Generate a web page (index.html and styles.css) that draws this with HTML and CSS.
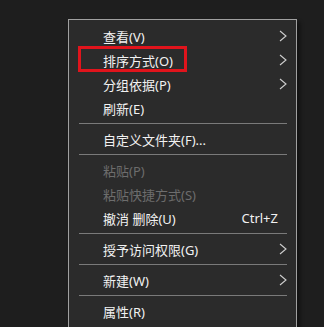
FILE: index.html
```html
<!DOCTYPE html>
<html lang="zh-CN">
<head>
  <meta charset="UTF-8" />
  <title>右键菜单</title>
  <link rel="stylesheet" href="styles.css">
</head>
<body>
  <div class="context-menu">
    <div class="item">
      <span class="label">查看(V)</span>
      <svg class="arrow" width="8" height="12" viewBox="0 0 8 12"><polyline points="1,1 7,6 1,11" /></svg>
    </div>
    <div class="item marked">
      <span class="label">排序方式(O)</span>
      <svg class="arrow" width="8" height="12" viewBox="0 0 8 12"><polyline points="1,1 7,6 1,11" /></svg>
      <span class="highlight-box"></span>
    </div>
    <div class="item">
      <span class="label">分组依据(P)</span>
      <svg class="arrow" width="8" height="12" viewBox="0 0 8 12"><polyline points="1,1 7,6 1,11" /></svg>
    </div>
    <div class="item">
      <span class="label">刷新(E)</span>
    </div>
    <div class="separator"></div>
    <div class="item">
      <span class="label">自定义文件夹(F)...</span>
    </div>
    <div class="separator"></div>
    <div class="item disabled">
      <span class="label">粘贴(P)</span>
    </div>
    <div class="item disabled">
      <span class="label">粘贴快捷方式(S)</span>
    </div>
    <div class="item">
      <span class="label">撤消 删除(U)</span>
      <span class="shortcut">Ctrl+Z</span>
    </div>
    <div class="separator"></div>
    <div class="item">
      <span class="label">授予访问权限(G)</span>
      <svg class="arrow" width="8" height="12" viewBox="0 0 8 12"><polyline points="1,1 7,6 1,11" /></svg>
    </div>
    <div class="separator"></div>
    <div class="item">
      <span class="label">新建(W)</span>
      <svg class="arrow" width="8" height="12" viewBox="0 0 8 12"><polyline points="1,1 7,6 1,11" /></svg>
    </div>
    <div class="separator"></div>
    <div class="item">
      <span class="label">属性(R)</span>
    </div>
  </div>
</body>
</html>
```

FILE: styles.css
```css
/* PAGE */
:root {
  --page-bg: #1e1e1e;
  --menu-bg: #2b2b2b;
  --menu-border: #a0a0a0;
  --text-color: #f2f2f2;
  --disabled-color: #6d6d6d;
  --mark-red: #e0141c;
}

html, body {
  margin: 0;
  padding: 0;
  height: 327px;
  overflow: hidden;
  background: var(--page-bg);
  font-family: "Noto Sans", "Noto Sans CJK SC", sans-serif;
  font-size: 13px;
  color: var(--text-color);
}

body {
  padding: 19px 0 0 68px;
  box-sizing: border-box;
}

/* MENU */
.context-menu {
  width: 229px;
  box-sizing: border-box;
  padding: 4px 0;
  background: var(--menu-bg);
  border: 1px solid var(--menu-border);
  box-shadow: 3px 3px 4px rgba(0, 0, 0, 0.45);
}

.item {
  position: relative;
  height: 24px;
  display: flex;
  align-items: center;
  justify-content: space-between;
  padding: 0 9px 0 34px;
  white-space: nowrap;
}

.item.disabled {
  color: var(--disabled-color);
}

.arrow {
  display: block;
}
.arrow polyline {
  fill: none;
  stroke: #cfcfcf;
  stroke-width: 1.1;
}

.shortcut {
  margin-right: 9px;
}

.separator {
  height: 1px;
  margin: 3px 9px 3px 10px;
  background: #7a7a7a;
}

/* red annotation around one entry */
.highlight-box {
  position: absolute;
  left: 9px;
  top: -2px;
  width: 109px;
  height: 26px;
  box-sizing: border-box;
  border: 3px solid var(--mark-red);
}
```
